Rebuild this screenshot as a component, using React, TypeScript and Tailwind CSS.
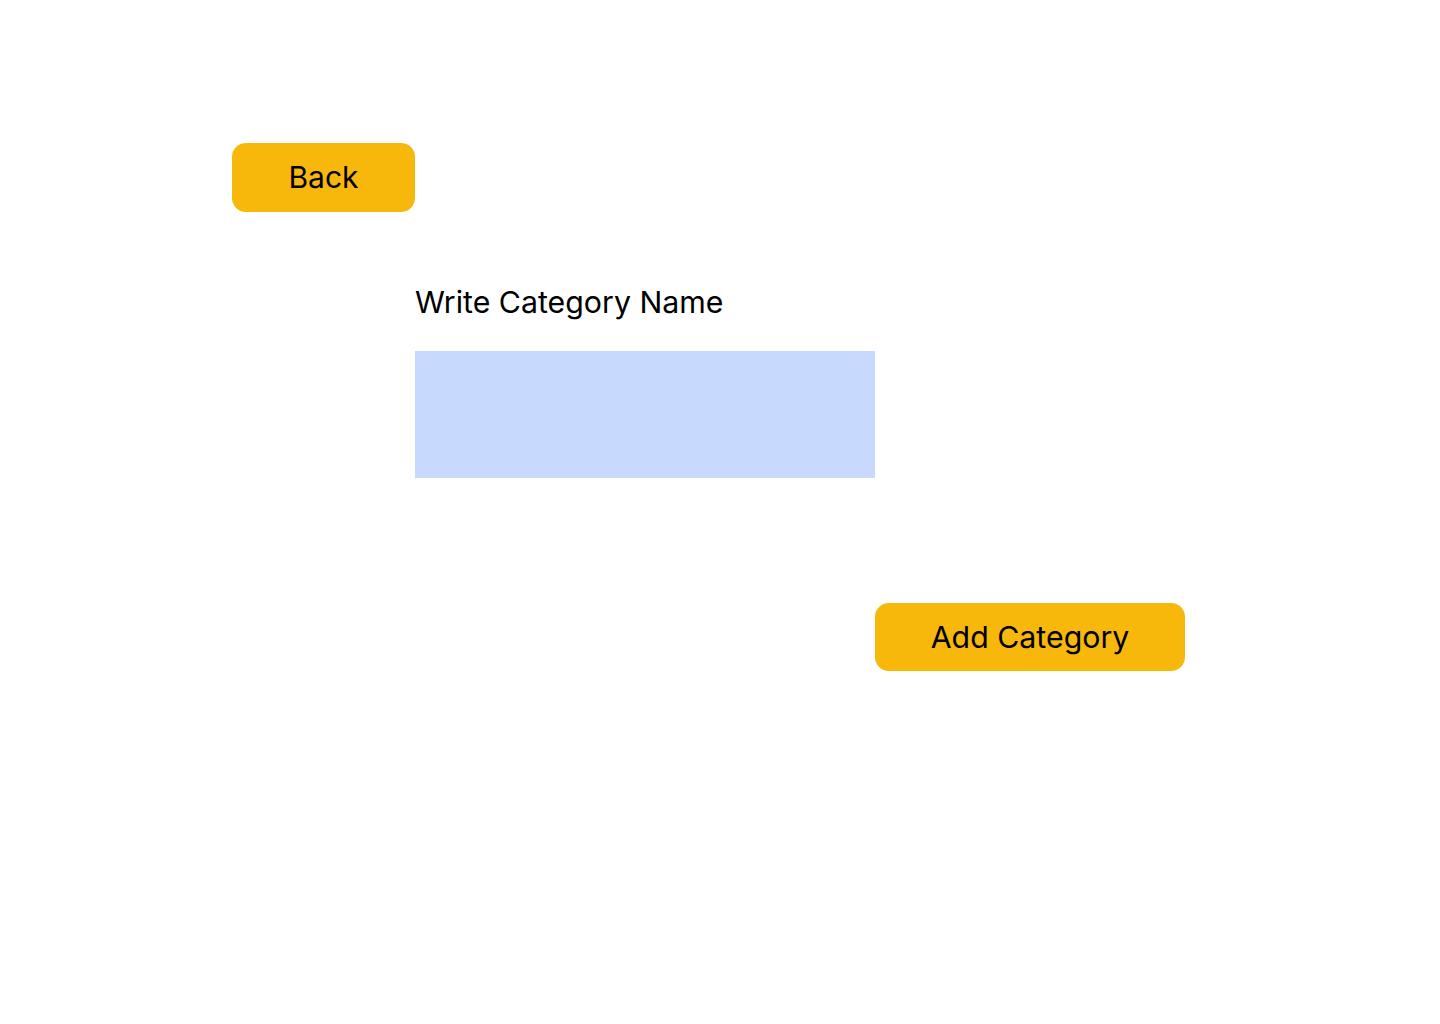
import React from "react";

export default function App() {
  return (
    <div
      className="min-h-[1024px] w-full bg-white text-black"
      style={{ fontFamily: "Inter, 'Noto Sans', sans-serif" }}
    >
      <div className="pl-[232px] pt-[143px]">
        <button className="flex h-[69px] w-[183px] items-center justify-center rounded-[14px] bg-[#F8B70B] pb-[2px] text-[30px] leading-none text-black">
          Back
        </button>
        <div className="ml-[183px] mt-[73px] flex flex-col">
          <label className="text-[30.3px] leading-[34px]">Write Category Name</label>
          <input
            type="text"
            className="mt-[32px] h-[127px] w-[460px] bg-[#C7D9FD] outline-none"
          />
          <button className="ml-[460px] mt-[125px] flex h-[68px] w-[310px] items-center justify-center rounded-[14px] bg-[#F8B70B] text-[30.3px] leading-none text-black">
            Add Category
          </button>
        </div>
      </div>
    </div>
  );
}
